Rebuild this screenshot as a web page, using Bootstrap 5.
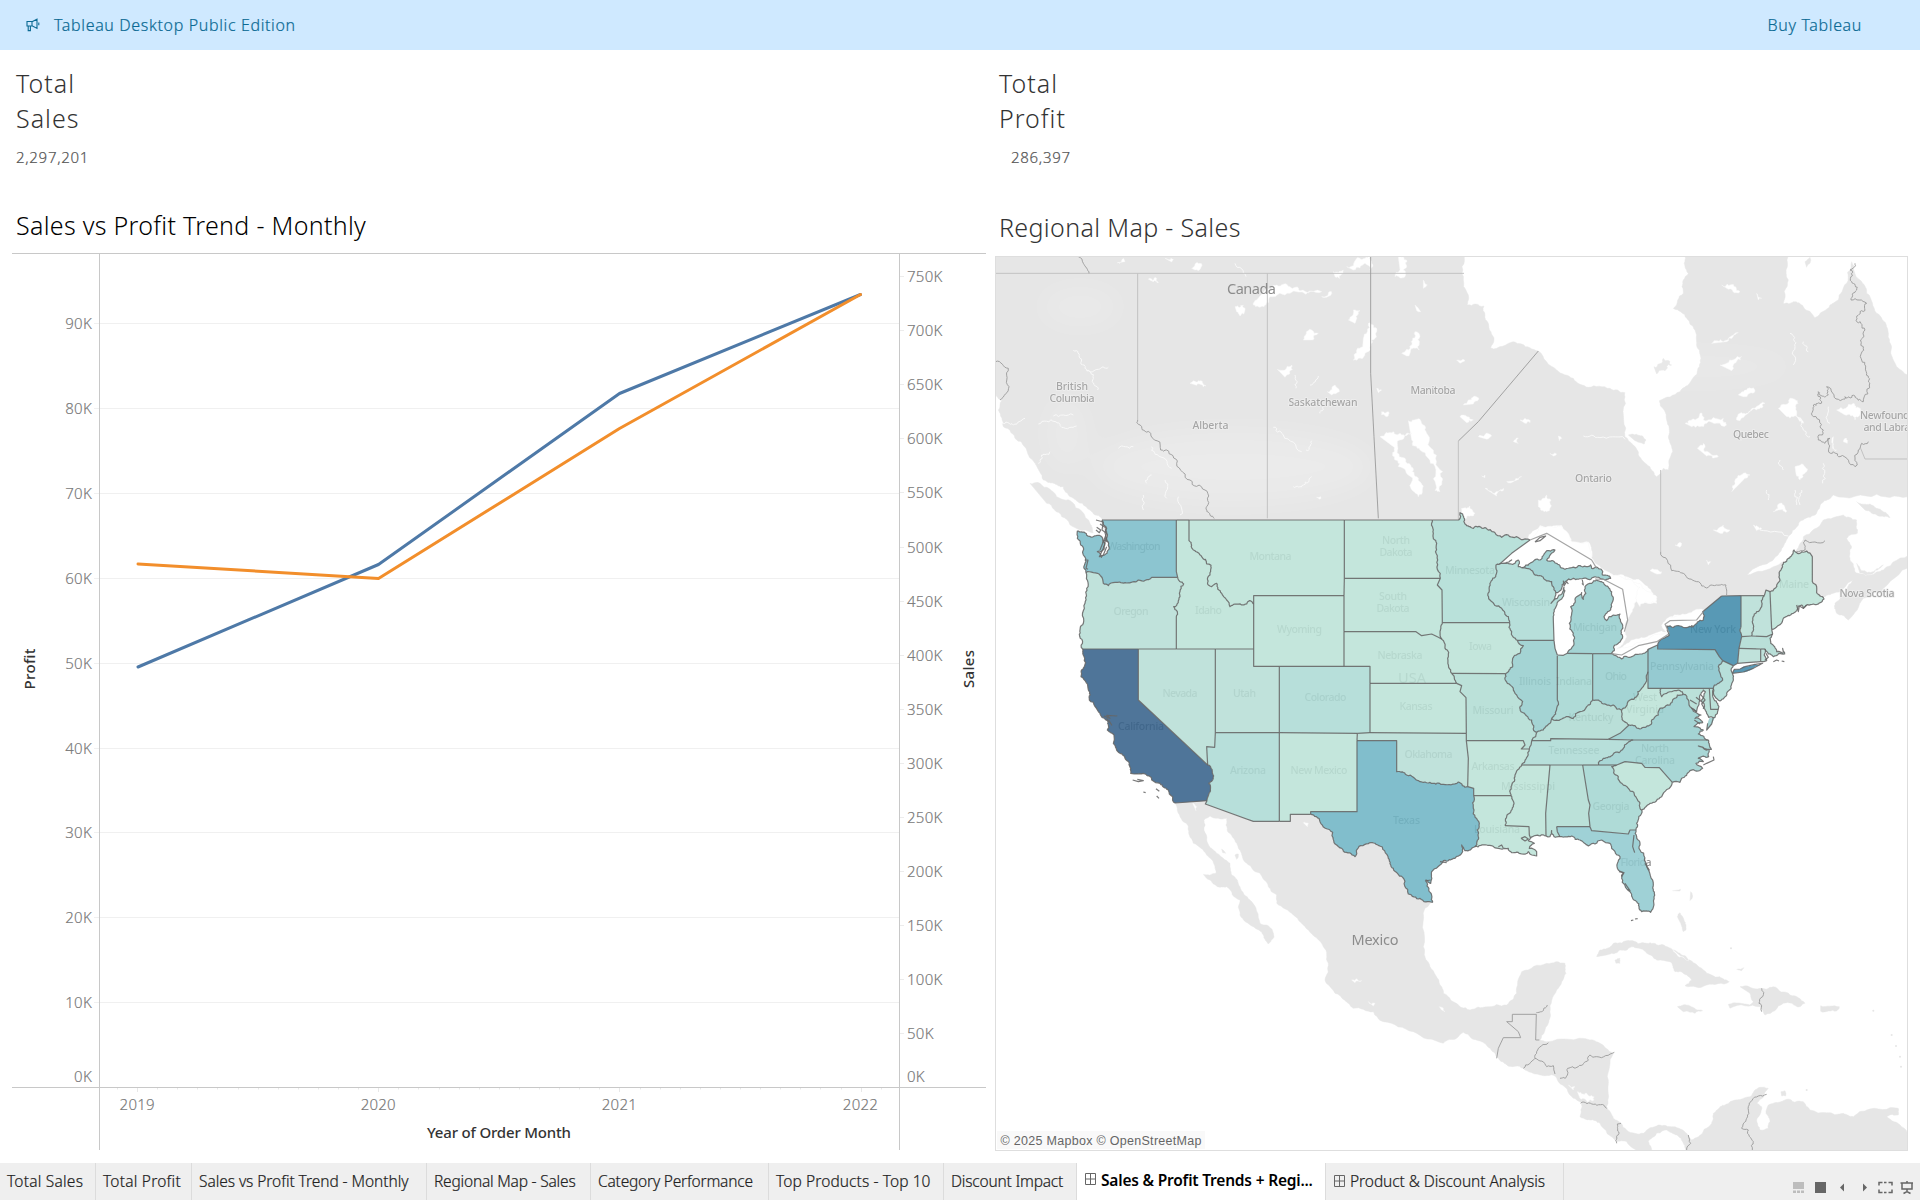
<!DOCTYPE html>
<html lang="en">
<head>
<meta charset="utf-8">
<title>Sales &amp; Profit Trends + Regional Map</title>
<link rel="stylesheet" href="https://cdn.jsdelivr.net/npm/bootstrap@5.3.0/dist/css/bootstrap.min.css">
<style>
  body { width: 1920px; height: 1200px; overflow: hidden; background: #fff; font-family: "Noto Sans", sans-serif; color: #333; }
  .promo-bar { height: 50px; background: #cfe9ff; color: #0b6a94; font-size: 16px; padding: 0 58px 0 26px; }
  .promo-text { font-weight: 300; -webkit-text-stroke: .2px; letter-spacing: .64px; }
  .promo-lead { margin-left: 14px; }
  .dash { height: 1113px; }
  .col-left { width: 995px; padding-left: 12px; }
  .col-right { width: 925px; }
  .kpi { height: 140px; padding: 16px 4px 0; }
  .kpi-title, .viz-title { font-size: 25px; line-height: 35px; font-weight: 300; margin: 0; white-space: nowrap; color: #333; }
  .kpi-title { letter-spacing: 1px; }
  .kpi-num { font-size: 15px; line-height: 20px; margin-top: 11px; color: #555; font-weight: 300; -webkit-text-stroke: .2px; letter-spacing: .7px; }
  .kpi-num.inset { margin-left: 12px; }
  .viz-title { height: 63px; padding: 18px 4px 0; letter-spacing: .3px; }
  .viz-title.dark { color: #000; }
  .viz-title.low { height: 66px; padding-top: 20px; letter-spacing: .36px; }
  svg { display: block; }
  svg text { font-family: "Noto Sans", sans-serif; }
  .tabs { height: 37px; background: #efefef; font-size: 15.5px; color: #222; }
  .tab { border-right: 1px solid #dcdcdc; white-space: nowrap; padding: 1px 0 0 7px; font-weight: 300; -webkit-text-stroke: .2px; flex: none; letter-spacing: -.06px; }
  .tab.wide { letter-spacing: .22px; }
  .tab svg { margin: -3px 5px 0 1px; }
  .tab-on { background: #fff; color: #000; font-weight: 600; -webkit-text-stroke: 0; padding-top: 0; padding-bottom: 2px; letter-spacing: -.2px; }
  .tab-tools { padding: 0 7px 5px 0; }
  .ax { font-size: 15px; fill: #777; font-weight: 300; stroke: #777; stroke-width: .15px; letter-spacing: .25px; }
  .axt { font-size: 15px; fill: #333; font-weight: 500; }
  .prov { font-size: 10.5px; fill: #a6a6a6; text-anchor: middle; font-weight: 500; paint-order: stroke; stroke: #efefef; stroke-width: 1.5px; }
  .prov.covered { stroke: none; fill: #8c8c8c; }
  .ctry { font-size: 14.5px; fill: #8c8c8c; }
  .note { font: 12.5px "Liberation Sans", sans-serif; fill: #666; }
  .land { fill: #e6e6e6; stroke: #f4f4f4; stroke-width: 3; paint-order: stroke; }
  .water { fill: #fff; stroke: #f6f6f6; stroke-width: 1.5; }
  .edge { fill: none; stroke: #9a9a9a; stroke-width: 2.7; }
  .prv { fill: none; stroke: #c2c2c2; stroke-width: 3; }
  .river { fill: none; stroke: #f8f8f8; stroke-width: 3; }
</style>
</head>
<body class="d-flex flex-column">
<header class="promo-bar d-flex align-items-center justify-content-between flex-shrink-0">
  <div class="d-flex align-items-center">
    <svg width="14" height="14" viewBox="0 0 14 14" fill="none" stroke="#0b6a94" stroke-width="1.1"><path d="M1 3.5h5v4.5H1zM6 3.8L11 1.2v9.2L6 7.8M2.2 8v4.6h2.2V8M12.8 4.6v2.6"/></svg>
    <span class="promo-text promo-lead">Tableau Desktop Public Edition</span>
  </div>
  <span class="promo-text">Buy Tableau</span>
</header>

<main class="dash d-flex flex-shrink-0">
  <section class="col-left">
    <div class="kpi"><h1 class="kpi-title">Total<br>Sales</h1><div class="kpi-num">2,297,201</div></div>
    <h2 class="viz-title dark">Sales vs Profit Trend - Monthly</h2>
    <svg id="trend" width="975" height="898" viewBox="12 253 975 898"></svg>
  </section>
  <section class="col-right">
    <div class="kpi"><h1 class="kpi-title">Total<br>Profit</h1><div class="kpi-num inset">286,397</div></div>
    <h2 class="viz-title low">Regional Map - Sales</h2>
    <svg id="map" width="913" height="895" viewBox="995 256 913 895"></svg>
  </section>
</main>

<footer class="tabs d-flex flex-shrink-0">
  <div class="tab wide d-flex align-items-center" style="width:96px">Total Sales</div>
  <div class="tab wide d-flex align-items-center" style="width:96px">Total Profit</div>
  <div class="tab d-flex align-items-center" style="width:235px">Sales vs Profit Trend - Monthly</div>
  <div class="tab d-flex align-items-center" style="width:164px;letter-spacing:-.2px">Regional Map - Sales</div>
  <div class="tab d-flex align-items-center" style="width:178px;letter-spacing:-.2px">Category Performance</div>
  <div class="tab d-flex align-items-center" style="width:175px;letter-spacing:.1px">Top Products - Top 10</div>
  <div class="tab d-flex align-items-center" style="width:133px;letter-spacing:-.2px">Discount Impact</div>
  <div class="tab tab-on d-flex align-items-center" style="width:249px"><svg width="11" height="12" viewBox="0 0 11 12" fill="none" stroke="#666"><path d="M.5.5h10v11H.5zM5.5.5v11M.5 6h10"/></svg>Sales &amp; Profit Trends + Regi...</div>
  <div class="tab d-flex align-items-center" style="width:238px"><svg width="11" height="12" viewBox="0 0 11 12" fill="none" stroke="#666"><path d="M.5.5h10v11H.5zM5.5.5v11M.5 6h10"/></svg>Product &amp; Discount Analysis</div>
  <div class="tab-tools ms-auto d-flex align-items-end">
    <svg width="120" height="14" viewBox="0 0 120 14"><g fill="#bdbdbd"><path d="M0 1h11v7H0zM0 9.5h3V12H0zM4 9.5h3V12H4zM8 9.5h3V12H8z"/></g>
      <path fill="#666" d="M22 1h11v11H22zM51 2.5v8l-4-4zM70 2.5v8l4-4z"/>
      <path fill="none" stroke="#666" stroke-width="1.5" d="M86 4.500V1.500h3.500M91 1.500h2.500M95.500 1.500H99v3M99 8.500v3h-3.500M91 11.500h2.500M89.500 11.500H86v-3M107.500 2h13M109 2v6h10V2M114 0v2M114 8v3M110.500 12.500l3.500-2 3.500 2"/></svg>
  </div>
</footer>

<script src="https://cdn.jsdelivr.net/npm/bootstrap@5.3.0/dist/js/bootstrap.bundle.min.js"></script>
<script>
/* ---- Trend chart ---- */
(function () {
  let h = '';
  const ln = (x1, y1, x2, y2, c) => h += `<path d="M${x1} ${y1}L${x2} ${y2}" stroke="${c}" fill="none"/>`;
  for (let i = 1; i < 10; i++) {
    const y = Math.floor(1087.5 - i * 84.87) + .5;
    ln(94, y, 899, y, '#f0f0f0');
    h += `<text class="ax" x="92" y="${y + 5.5}" text-anchor="end">${i}0K</text>`;
  }
  h += '<text class="ax" x="92" y="1082" text-anchor="end">0K</text><text class="ax" x="907" y="1082">0K</text>';
  for (let i = 1; i <= 15; i++) {
    const y = Math.round(1087.5 - i * 54.1) + .5;
    ln(900, y, 904, y, '#ececec');
    h += `<text class="ax" x="907" y="${y + 5.5}">${i * 50}K</text>`;
  }
  for (let i = -1; i <= 37; i++) {
    const x = Math.round(137 + i * 20.1) + .5;
    ln(x, 1088, x, i % 12 ? 1089.5 : 1092, '#e8e8e8');
  }
  ln(12, 253.5, 986, 253.5, '#c8c8c8'); ln(12, 1087.5, 986, 1087.5, '#c8c8c8');
  ln(99.5, 253, 99.5, 1150, '#c8c8c8'); ln(899.5, 253, 899.5, 1150, '#c8c8c8');
  [2019, 2020, 2021, 2022].forEach((y, i) => h += `<text class="ax" x="${137.2 + i * 241.1}" y="1110" text-anchor="middle">${y}</text>`);
  h += '<text class="axt" x="499" y="1138" text-anchor="middle" textLength="144">Year of Order Month</text>'
    + '<text class="axt" transform="translate(35 669) rotate(-90)" text-anchor="middle" textLength="41">Profit</text>'
    + '<text class="axt" transform="translate(973.500 669) rotate(-90)" text-anchor="middle" textLength="38">Sales</text>'
    + '<g fill="none" stroke-width="3" stroke-linejoin="round" stroke-linecap="round"><path stroke="#4e79a7" d="M138 667L378.500 564.500L619.500 393.500L860.500 294.500"/>'
    + '<path stroke="#f28e2b" d="M138 564L378.500 578.500L619.500 428.500L860.500 294.500"/></g>';
  document.getElementById('trend').innerHTML = h;
})();

/* ---- Map: grid of three units per pixel, split into tiles with their own origins ---- */
(function () {
  const O = { A: [0, 0], B: [1140, 0], C: [0, 840], D: [1140, 960], E: [-210, -750], F: [1170, -750] };
  let seed = 7;
  const rnd = () => (seed = (seed * 16807) % 2147483647) / 2147483647 - .5;
  // Reads "A 1,2 3,4 B 5,6": a letter selects the tile, the pairs are its points
  function pts(s) {
    let o = O.A; const r = [];
    s.trim().split(/\s+/).forEach(t => {
      if (O[t]) o = O[t]; else { const p = t.split(',').map(Number); r.push([p[0] + o[0], p[1] + o[1]]); }
    });
    return r;
  }
  // Natural coast or river: subdivides each segment with a small offset; sides longer than max stay straight
  function rough(p, k, max) {
    for (let n = 0; n < 3; n++) {
      const q = [p[0]];
      for (let i = 1; i < p.length; i++) {
        const a = p[i - 1], b = p[i], dx = b[0] - a[0], dy = b[1] - a[1], L = Math.hypot(dx, dy);
        if (L > 7 && !(max && L > max)) { const m = Math.max(-5, Math.min(5, rnd() * k * L)) / L; q.push([(a[0] + b[0]) / 2 - dy * m, (a[1] + b[1]) / 2 + dx * m]); }
        q.push(b);
      }
      p = q;
    }
    return p;
  }
  const d = p => 'M' + p.map(a => a[0].toFixed(1) + ' ' + a[1].toFixed(1)).join('L');
  let base = '';
  const area = (s, c, k) => base += `<path class="${c}" d="${d(rough(pts(s), k === undefined ? .3 : k))}Z"/>`;
  const line = (s, c, k) => base += `<path class="${c}" d="${d(k ? rough(pts(s), k) : pts(s))}"/>`;

  // Canada
  area(`E 10,10 F 42,10 40,90 52,165 102,168 115,220 132,270 122,293 190,275 215,282 265,303 320,360 370,385 415,412 480,415 525,428 527,460 525,560 565,615 600,650 620,680 640,655 655,660 668,605 655,560 650,510 628,452 690,425 725,390 748,350 748,300 735,240 710,205 670,175 700,130 700,90 715,70 705,50 710,10 1012,10 1015,90 1000,160 1030,155 1060,170 1095,203 1140,165 1165,150 1190,100 1205,35 1230,90 1250,130 1280,190 1310,230 1325,290 1330,330 1385,395 1385,737 1280,733 1150,735 1115,760 1100,790 1060,810 1020,855 1000,890 960,935 880,980 970,950 1030,910 1060,860 1120,810 1180,795 1220,810 1222,850 1190,865 1205,890 1200,930 1215,965 1260,975 1300,960 1385,910 1385,945 1290,1030 1240,1045 1195,1110 1160,1090 1155,1060 1190,1020 1210,990 1150,1030 1115,1050 1050,1020 900,1060 800,1090
    B 800,330 765,335 720,345 690,350 678,365 665,375 680,395 620,410 560,430 530,450 523,440 545,400 550,370 570,340 590,300 620,310 650,308 640,280 600,240 560,230 520,225 485,205 455,175 445,125 395,125 365,75 300,75 262,118 180,150 0,150 A 300,200 140,100 126,60 E 335,805 315,795 300,780 250,745 220,710 190,700 160,690 135,640 110,600 80,570 40,530 25,480 35,450 10,420`, 'land');
  area('E 120,700 150,700 200,740 245,755 300,820 310,848 270,840 215,800 170,760', 'land');
  area('F 1220,755 1260,762 1300,785 1320,803 1285,798 1245,780', 'land');
  area('F 1220,940 1235,962 1270,965 1300,945 1265,972 1230,970', 'land');
  area('F 535,555 560,553 588,570 583,582 555,572', 'land'); area('F 1065,35 1080,22 1080,40 1070,52', 'land');
  area('F 612,350 640,325 665,345 640,360 620,372', 'land', .8);
  // Paler plains and hills
  base += '<g fill="#fff" filter="url(#soft)"><ellipse cx="520" cy="-100" rx="420" ry="110" opacity=".2"/><ellipse cx="60" cy="-580" rx="120" ry="60" opacity=".16"/><ellipse cx="20" cy="-200" rx="60" ry="110" opacity=".16"/><ellipse cx="1010" cy="1330" rx="70" ry="110" opacity=".14"/><ellipse cx="1900" cy="-400" rx="300" ry="60" opacity=".1"/><ellipse cx="700" cy="1080" rx="60" ry="80" opacity=".16"/></g>';
  // Mexico, Central and South America
  area(`C 345,55 345,70 360,110 385,140 400,190 440,225 465,260 468,280 430,283 450,300 480,322 500,320 540,360 540,405 580,440 610,465 625,492 642,470 625,437 600,430 570,360 540,320 515,285 510,250 470,220 440,180 432,120 450,108 500,115 503,155 530,190 560,250 600,280 625,320 650,345 650,370 700,405 745,450 790,500 805,550 795,600 825,640 880,685 940,695 970,725 1060,755 1150,790 1190,775 1210,757 1260,783
    D 175,715 200,735 250,745 300,765 345,768 355,785 400,835 425,850 420,890 450,900 480,910 530,965 560,965 610,1000 640,1000 625,965 650,940 680,930 710,945 730,970 740,1000 1410,1000 1410,945 1385,920 1340,890 1375,885 1375,865 1280,870 1240,890 1210,880 1110,870 1090,845 1040,838 985,855 978,880 990,905 985,925 960,930 950,900 965,860 950,850 985,805 960,802 930,830 870,845 840,860 820,880 815,910 775,950 755,960 740,940 700,920 655,915 610,940 560,930 520,895 500,860 505,780 520,700 480,670 450,660 320,665 300,660 325,610 330,575 350,510 378,460 375,430 320,430 245,455 230,520 200,555 140,560 90,570 40,545 10,520 0,495
    C 1110,560 1090,500 1095,385 1118,365 1050,300 900,100 650,60`, 'land', .25);
  area('D 470,410 480,390 520,370 570,362 620,370 660,375 700,395 740,420 790,450 840,470 868,485 800,495 735,497 755,480 740,465 705,455 690,425 650,420 620,400 580,380 540,390 500,405', 'land');
  area('D 712,560 750,558 788,572 765,580 730,575', 'land'); area('D 525,420 540,415 540,430 528,430', 'land');
  area('D 900,500 960,505 1000,500 1050,525 1095,550 1080,560 1030,550 975,585 960,560 870,565 865,553 930,555 940,545 930,520', 'land');
  area('D 1142,557 1198,560 1190,573 1142,574', 'land'); area('D 712,290 720,278 732,300 738,330 730,335 722,310', 'land');
  area('D 890,448 912,443 905,452', 'land'); area('D 1023,815 1035,812 1037,828 1025,828', 'land');
  area('C 525,225 535,222 530,238', 'land'); area('C 485,207 497,220 488,218', 'land');
  area('D 698,212 722,208 720,213', 'land'); area('D 752,215 758,228 750,242', 'land'); area('D 700,390 720,400 745,422 722,408', 'land');
  [[1355, 645], [1368, 678], [1380, 710], [1383, 740], [1300, 572], [1100, 810], [873, 385]].forEach(p => base += `<circle cx="${p[0] + 1140}" cy="${p[1] + 960}" r="3" fill="#e6e6e6"/>`);

  // Lakes
  ['E 830,115 860,105 900,110 930,122 995,125 900,130 840,140 822,170 790,165 800,150', 'E 735,170 760,165 765,180 750,198 740,185', 'E 1255,512 1290,508 1310,550 1330,600 1358,665 1350,725 1335,722 1335,650 1290,600 1265,570',
   'E 1170,560 1210,545 1235,555 1265,550 1230,570 1228,620 1262,645 1280,680 1297,720 1285,740 1268,722 1262,680 1225,650 1213,620 1210,590', 'E 1075,210 1090,180 1110,182 1095,220', 'E 1120,265 1135,220 1160,235 1145,270 1125,310 1090,330 1100,300 1118,290',
   'E 940,270 965,240 985,250 965,270', 'E 862,358 885,360 905,345 900,370 885,382', 'E 1012,425 1035,405 1048,425 1025,435', 'E 1235,310 1265,285 1275,245 1290,260 1288,300 1262,300 1250,318', 'E 600,400 625,392 648,408 620,406', 'E 475,88 500,85 505,98 490,95',
   'E 382,38 400,25 405,35', 'E 525,25 550,28 545,36', 'E 605,55 630,40 632,55 615,60', 'E 1070,50 1110,25 1140,20 1140,60 1125,40 1090,60', 'E 1225,20 1250,30 1240,60 1245,80 1215,80 1230,60', 'E 1300,90 1312,105 1300,115', 'E 1275,165 1292,185 1280,182', 'E 1030,65 1060,60 1050,85 1035,80', 'E 995,140 1025,125 1010,142', 'E 980,742 992,740 990,748', 'E 1160,415 1175,420 1165,428', 'E 1175,485 1195,485 1190,500 1175,495',
   'F 815,105 840,105 870,125 830,115', 'F 785,280 820,275 865,248 830,275', 'F 810,345 830,340 875,320 850,345 845,362', 'F 705,520 735,510 750,490 760,510 820,505 830,525 770,520 725,530', 'F 860,510 870,490 900,485 945,460 920,480 870,512', 'F 865,435 890,420 915,420 880,440', 'F 985,475 1020,445 1045,460 1040,500 1060,520 1030,500 1010,500', 'F 845,725 855,690 880,670 900,675 880,690', 'F 742,595 760,580 765,605 805,620 770,618', 'F 40,465 55,450 85,443 70,462', 'F 30,500 70,510 50,518', 'F 210,510 225,505 240,518 225,520', 'F 265,750 290,735 300,760 290,785 265,770', 'F 170,695 215,680 195,692', 'F 105,715 125,725 160,715 140,738', 'F 85,560 125,558 105,566', 'F 20,330 45,332 30,340', 'F 300,610 320,612 310,618', 'F 790,840 820,825 840,840 810,850', 'F 600,962 635,965 615,970', 'F 35,775 60,768 75,790 50,805 35,795', 'F 910,825 935,835 920,842', 'F 970,785 990,760 1010,785 985,780', 'F 1160,480 1210,460 1232,480 1215,510 1185,495', 'F 1150,560 1160,600 1148,590', 'F 1180,575 1190,565 1192,580', 'F 920,130 935,145 925,150', 'F 190,575 205,565 205,580', 'F 325,558 335,565 328,572', 'F 95,678 105,675 105,683', 'F 770,930 782,935 775,945', 'F 675,885 695,880 690,892', 'F 1035,650 1055,642 1070,665 1050,690 1038,672',
   'C 730,128 745,130 742,140', 'C 875,600 905,602 885,608', 'C 925,665 945,670 940,678', 'C 1138,680 1155,695 1145,690', 'C 398,70 410,80 408,92', 'D 412,815 440,820 462,840 445,848 420,835', 'D 385,795 405,800 400,810',
   'B 555,230 600,250 640,285 650,310 600,320 575,280'].forEach(s => area(s, 'water', .7));
  // Great Lakes
  area('B 172,198 205,165 270,118 300,78 365,78 395,125 445,128 455,175 485,205 520,228 575,240 600,262 590,300 570,345 555,380 560,410 530,448 590,428 680,398 650,440 620,455 545,482 505,462 400,300 400,470 340,470 335,300 240,210', 'water');
  area('B 640,440 690,410 665,375 690,350 740,342 765,330 790,330 800,370 700,400', 'water');
  ['E 250,300 270,325 285,355 310,385 323,420', 'E 290,362 325,358 355,352', 'E 190,498 250,495', 'E 145,522 195,515 215,532 260,528', 'E 485,590 510,620 545,655', 'E 850,532 880,555 935,605', 'E 948,600 965,572', 'E 910,710 940,705 965,680', 'E 385,595 430,590', 'E 460,780 460,735', 'E 565,740 570,795', 'E 525,690 530,745', 'E 990,490 1000,465', 'E 735,40 768,80', 'E 915,375 918,415', 'E 960,405 985,378', 'E 145,640 155,615 180,605', 'E 35,520 70,525 105,505', 'E 470,700 485,675', 'F 400,558 450,563 525,568', 'F 1020,250 1035,290 1030,345', 'F 1060,275 1075,305', 'F 1040,490 1060,540 1080,560', 'F 1120,640 1118,700', 'F 1055,720 1050,765', 'F 1035,720 1040,765', 'F 990,630 1000,660', 'F 950,720 955,750', 'F 930,840 1015,858', 'F 1135,470 1140,520'].forEach(s => line(s, 'river', .7));

  // Provincial and national borders
  line('E 17,70 F 42,70', 'prv'); line('E 443,70 443,510', 'prv'); line('E 832,70 832,805', 'prv');
  line('E 1142,20 1142,370 1152,560 1165,805', 'edge'); line('F 265,303 85,515 25,573', 'edge'); line('F 25,573 25,808', 'prv');
  line('E 443,510 455,530 482,550 512,600 530,600 560,640 600,690 645,720 650,770 660,795 673,805', 'edge', .6);
  line('F 632,660 632,905', 'prv'); line('F 632,905 665,962 700,970 740,995 775,1012 800,1005 828,1005 830,1035', 'edge', .4);
  line('F 1215,40 1200,60 1205,95 1220,120 1203,150 1250,160 1230,185 1220,215 1245,240 1240,290 1235,330 1250,370 1258,405 1240,455 1215,438 1185,440 1165,448 1130,410 1127,440 1105,425 1115,455 1090,465 1090,500 1120,540 1105,570 1125,580 1140,565 1142,610 1170,620 1215,650 1225,600 1235,580 1255,575', 'edge', .8);
  line('F 1232,595 1245,627 1372,627', 'prv'); line('F 1040,905 1065,900 1065,870 1125,872', 'edge', .5);
  line('E 17,335 55,355 57,410 30,450', 'edge', .4); line('E 265,20 280,40 297,70', 'edge', .4);
  line('D 170,715 175,685 190,653 242,653 235,635 200,605 217,605 217,583 289,583 287,660 298,660', 'edge'); line('D 289,578 305,575 322,555', 'edge', .4);
  line('D 250,745 285,715 290,695 325,668', 'edge', .4); line('D 285,715 320,740 340,737 345,762', 'edge', .4);
  line('D 360,775 375,775 383,745 415,740 445,720 450,705 470,710 523,697', 'edge', .5); line('D 422,850 460,853 500,865', 'edge', .5);
  line('D 543,910 532,912 537,940 530,970', 'edge', .4); line('D 745,945 752,970 740,990', 'edge', .4); line('D 980,823 955,828 925,860 918,900 905,925 925,930 940,965 937,990', 'edge', .4);
  line('D 965,505 968,530 957,550 965,575', 'edge', .5);

  // State borders: each arc is shared by the states on both sides; "~" marks a natural one
  const arcs = {
    waN: '126,60 349,60', waC: '~126,60 138,80 140,100 146,130 143,152 124,172 112,155 132,148 128,120 118,106 80,106 52,93 52,115 62,135 70,165 75,190 78,218', waOr: '~78,218 100,218 122,228 130,250 145,257 165,247 200,249 235,240 275,232 353,232', waId: '349,60 349,215 353,232',
    orC: '~78,218 80,265 75,310 70,370 58,403 68,447', orId: '~353,232 371,252 360,290 341,320 352,335 349,350 349,447', orCa: '68,447 235,447', orNv: '235,447 349,447', idNv: '349,447 466,447', idUt: '466,447 581,447', idN: '349,60 387,60',
    idMt: '~387,60 387,122 400,150 425,170 440,192 453,196 450,225 445,255 455,260 470,250 485,280 500,300 510,320 525,312 545,315 560,312 568,302 581,312', mtWy: '581,312 581,287 852,287', idWy: '581,312 581,447', wyUt: '581,447 581,499 658,499',
    mtN: '387,60 853,60', mtNd: '853,60 853,235', mtSd: '853,235 852,287', wySd: '852,287 852,395', wyNe: '852,395 852,499', wyCo: '658,499 852,499', neCo: '852,499 930,499 930,550', ndN: '853,60 1117,60', ndSd: '853,235 1141,235', ndMn: '~1117,60 1120,100 1130,130 1133,180 1141,235', sdMn: '1141,235 1132,255 1146,270 1147,368',
    sdNe: '852,395 1068,395 1085,407 1115,402 1135,412 1146,418', sdIa: '~1147,368 1140,395 1146,418', neIa: '~1146,418 1155,440 1165,470 1172,510 1175,520', neMo: '~1175,520 1190,550', neKs: '930,550 1190,550', ksMo: '1190,550 1205,557 1200,575 1218,593 1219,700', coKs: '930,550 930,698', coOk: '892,700 930,698', ksOk: '930,698 1219,700', coNm: '658,698 892,700', coUt: '658,499 658,698', utAz: '466,698 658,698', utNv: '466,447 466,698',
    nvAz: '466,698 464,742 440,740 443,795', nvCa: '235,447 235,600 443,795', caAz: '~443,795 461,828 446,850 447,880 441,902', caMx: '441,902 345,909', caC: '~68,447 74,475 73,500 63,530 85,570 88,600 120,640 138,660 142,690 162,705 160,730 180,760 208,790 212,820 255,822 275,840 300,850 325,870 338,890 345,909', azMx: '441,902 436,912 580,964 658,964', azNm: '658,698 658,964', nmMx: '658,964 691,964 691,943 752,943', nmTx: '752,943 752,935 891,935 891,722', nmOk: '892,700 891,722',
    txOk: '~891,722 1010,722 1010,815 1040,825 1060,832 1080,845 1120,850 1150,853 1195,846 1223,860', okMo: '1219,700 1219,722', okAr: '1219,722 1225,775 1223,860', moAr: '1219,722 B 250,722 255,735 244,747 268,747', arTx: '1223,860 1241,865 1241,887', arLa: '1241,887 1353,887', txLa: '~B 101,887 102,930 118,970 115,1010 105,1040',
    txMx: '~752,943 780,965 818,997 830,1035 850,1053 885,1070 902,1037 925,1031 955,1036 985,1075 1000,1105 1028,1132 1045,1182 1080,1195 1118,1207', txC: '~B 105,1040 75,1052 65,1035 68,1055 45,1075 A 1150,1082 1140,1095 1118,1112 1112,1150 1098,1140 1108,1175 1118,1207',
    mnN: '~B -23,60 56,60 60,38 68,42 75,72 100,85 135,83 165,98 185,112 205,105 230,110 270,120', mnLk: 'B 270,120 215,160 178,193', mnWi: '~B 178,193 168,195 167,230 148,260 150,300 185,325 205,350 209,368', mnIa: 'B 7,368 209,368', wiIa: '~B 209,368 215,395 232,421', wiIl: 'B 232,421 342,421', iaIl: '~B 232,421 250,437 240,460 218,475 218,500 197,521', iaMo: 'B 35,520 197,521', ilMo: '~B 197,521 202,550 230,585 248,605 243,635 275,660 285,695 290,697',
    ilKy: '~B 290,697 310,690 330,670 335,655', ilIn: '~B 335,655 350,625 352,600 352,467', ilLk: 'B 342,421 345,445 352,465', inLk: 'B 352,465 370,466 382,460', miIn: 'B 382,460 458,461', inOh: 'B 458,461 458,600', miOh: 'B 458,461 512,461', inKy: '~B 335,655 365,657 385,650 400,655 420,635 440,620 458,600', ohKy: '~B 458,600 475,600 490,612 520,615 545,630', ohWv: '~B 545,630 558,620 570,600 590,590 605,565 620,540 624,515', ohPa: 'B 624,515 624,448', ohLk: '~B 512,461 530,468 545,477 575,470 600,462 624,448',
    paLk: 'B 624,448 653,435', paNy: 'B 653,435 653,447 825,449 838,470 848,482', paNj: '~B 848,482 835,500 848,540 820,565', paWv: 'B 624,515 624,565 665,565', paMd: 'B 665,565 808,565', paDe: 'B 808,565 820,565', njNy: 'B 848,482 880,497', njC: '~B 880,497 875,515 878,545 860,580 840,603 825,590 820,565', deMd: 'B 808,565 812,628 835,628', deC: '~B 820,565 822,598 835,628',
    wiSup: '~B 178,193 215,180 195,190 225,190 235,180 235,200 245,203', wiMi: '~B 245,203 280,218 310,232 335,245 340,260 347,278', upC: '~B 245,203 270,190 300,180 318,155 345,150 320,180 350,190 375,208 415,197 452,195 455,205 483,207 487,225 512,235 480,235 460,232 430,235 400,235 375,245 365,265 347,278', wiC: '~B 347,278 345,290 333,310 352,295 372,262 360,300 348,320 340,360 342,421',
    miC: '~B 382,460 402,430 400,400 388,370 392,320 410,290 425,278 430,298 435,260 455,250 470,240 495,255 515,275 515,320 492,350 500,362 520,345 540,342 548,375 548,410 525,435 523,452 512,461', nyLk: '~B 653,435 688,405 680,378 720,378 760,380 790,360 788,335 845,288', nyN: 'B 845,288 903,287', nyVt: '~B 903,287 903,380 905,410', nyMa: 'B 905,410 897,445', nyCt: 'B 897,445 893,490', nyC: 'B 893,490 880,497',
    vtN: 'B 903,287 973,287', vtNh: '~B 973,287 965,320 950,335 938,370 935,408', vtMa: 'B 905,410 935,408', nhMa: 'B 935,408 980,410 998,402', nhN: 'B 973,287 978,270 990,275', nhMe: 'B 990,275 995,388', nhC: 'B 995,388 998,402', meC: '~B 990,275 1005,265 1020,240 1025,205 1045,175 1062,150 1072,160 1100,153 1117,170 1117,245 1130,260 1138,285 1152,297 1120,312 1090,325 1085,315 1075,318 1060,340 1030,355 1005,385 995,388',
    maC: '~B 998,402 992,430 1010,455 1028,460 1028,445 1034,462 1000,470 985,462 975,447', maCt: 'B 897,445 962,447', maRi: 'B 962,447 975,447', ctRi: 'B 962,447 962,485', ctC: 'B 893,490 920,488 962,485', riC: '~B 962,485 980,482 975,447',
    mdWv: '~B 665,565 665,590 680,580 700,573 720,572 730,583', mdVa: '~B 730,583 745,600 750,620 770,635', mdC: '~B 770,635 778,605 790,570 796,575 785,600 790,625 800,640 806,652 825,652 835,628', wvVa: '~B 730,583 712,585 690,615 660,625 655,645 635,660 630,675 600,687 567,675', wvKy: '~B 545,630 545,650 567,675', kyVa: 'B 567,675 540,700 505,718', kyTn: 'B 505,718 332,716 332,722 275,722', moKy: '~B 290,697 287,710 275,722', moTn: '~B 275,722 268,747', arTn: '~B 268,747 262,770 245,795', tnMs: 'B 245,795 330,795', tnAl: 'B 330,795 428,795', tnGa: 'B 428,795 476,795', tnNc: '~B 476,795 490,775 520,762 550,745 580,720', tnVa: 'B 505,718 580,720', vaNc: 'B 580,720 805,720', vaC: '~B 770,635 755,625 783,645 765,655 788,668 762,680 790,690 775,702 805,720',
    ncGa: 'B 476,795 530,795', ncSc: 'B 530,795 555,785 605,790 615,802 658,803 697,847', ncC: '~B 805,720 814,748 775,738 808,752 806,770 775,775 790,785 768,790 788,805 750,812 725,835 720,847 697,847', gaSc: '~B 530,795 515,800 535,830 565,865 590,895 600,925 605,930', scC: '~B 697,847 665,890 630,910 605,930', gaC: '~B 605,930 590,970 588,990', gaFl: 'B 588,990 570,990 565,1002 455,992 450,980', flAl: 'B 450,980 350,980', alGa: 'B 428,795 445,900 450,915 446,940 450,980', msAl: 'B 330,795 317,940 318,1008', msAr: '~B 245,795 225,825 213,860 213,887', msLa: '~B 213,887 220,920 200,950 195,977', msLa2: 'B 195,977 267,980 268,1005 272,1015', msC: '~B 272,1015 300,1008 318,1008', alC: '~B 318,1008 330,1010 335,992 342,1010 360,1010', alFl: 'B 350,980 352,995 360,1010',
    laC: '~B 105,1040 140,1035 175,1045 205,1045 215,1058 245,1062 265,1055 290,1068 290,1055 268,1045 283,1030 265,1022 272,1015', flC: '~B 360,1010 395,1008 420,1020 445,1038 465,1032 485,1020 510,1030 525,1055 540,1070 535,1110 550,1120 545,1135 570,1175 590,1205 605,1235 632,1237 642,1190 640,1155 620,1100 600,1050 590,1010 588,990'
  };
  const P = {};
  for (const k in arcs) { const s = arcs[k]; P[k] = s[0] === '~' ? rough(pts(s.slice(1)), .4, 61) : pts(s); }
  const G = '#bde5d9', H = '#b9e1d8', M = '#aeddd7', N = '#98d0d0';
  const states = [
    ['#7bbecb', 'waN waId waOr waC'], [H, 'waOr orId orNv orCa orC'], ['#34608b', 'orCa nvCa caAz caMx caC'], [H, 'orNv idNv utNv nvAz nvCa'], [G, 'idN idMt idWy idUt idNv orId waId'], [G, 'mtN mtNd mtSd mtWy idMt'], [G, 'mtWy wySd wyNe wyCo wyUt idWy'], [H, 'idUt wyUt coUt utAz utNv'], [M, 'wyCo neCo coKs coOk coNm coUt'], [M, 'utAz azNm azMx caAz nvAz'], [G, 'coNm nmOk nmTx nmMx azNm'],
    [G, 'ndN ndMn ndSd mtNd'], [G, 'ndSd sdMn sdIa sdNe wySd mtSd'], [G, 'sdNe neIa neMo neKs neCo wyNe'], [G, 'neKs ksMo ksOk coKs'], [H, 'coOk ksOk okMo okAr txOk nmOk'], ['#6eb6c7', 'nmTx txOk arTx txLa txC txMx'], ['#b0dfd7', 'mnN mnLk mnWi mnIa sdMn ndMn'], [G, 'mnIa wiIa iaIl iaMo neIa sdIa'], ['#b3dfd6', 'iaMo ilMo moKy moTn moAr okMo ksMo neMo'], [G, 'moAr arTn msAr arLa arTx okAr'], [G, 'arLa msLa msLa2 laC txLa'],
    [M, 'mnWi wiSup wiMi wiC wiIl wiIa'], [N, 'wiMi upC'], [N, 'miC miOh miIn'], [N, 'wiIl ilLk ilIn ilKy ilMo iaIl'], ['#a5d8d4', 'inLk miIn inOh inKy ilIn'], [N, 'miOh ohLk ohPa ohWv ohKy inOh'], ['#b0ddd5', 'ilKy inKy ohKy wvKy kyVa kyTn moKy'], [M, 'kyTn tnVa tnNc tnGa tnAl tnMs arTn moTn'], [G, 'tnMs msAl msC msLa2 msLa msAr'], ['#b3dfd6', 'tnAl alGa flAl alFl alC msAl'], ['#a5d8d4', 'tnGa ncGa gaSc gaC gaFl alGa'], ['#92cdd2', 'flAl gaFl flC alFl'], [G, 'ncSc scC gaSc'], ['#9ed3d2', 'tnNc vaNc ncC ncSc ncGa'], [N, 'wvVa mdVa vaC vaNc tnVa kyVa'], [G, 'ohWv paWv mdWv wvVa wvKy'], ['#b3dfd6', 'paMd deMd mdC mdVa mdWv'], ['#b3dfd6', 'paDe deC deMd'], ['#aeddd7', 'njNy njC paNj'],
    ['#86c4cd', 'paLk paNy paNj paDe paMd paWv ohPa'], ['#3e8bac', 'nyLk nyN nyVt nyMa nyCt nyC njNy paNy'], [H, 'vtN vtNh vtMa nyVt'], [H, 'nhN nhMe nhC nhMa vtNh'], [G, 'meC nhMe'], ['#b0ddd5', 'vtMa nhMa maC maRi maCt nyMa'], [H, 'maCt ctRi ctC nyCt'], [H, 'maRi riC ctRi']
  ];
  const D2 = (a, b) => (a[0] - b[0]) ** 2 + (a[1] - b[1]) ** 2, last = a => a[a.length - 1];
  let under = '', over = '';
  const put = (c, q) => { under += `<path d="${q}Z" fill="#e6e6e6"/>`; over += `<path d="${q}Z" fill="${c}"/>`; };
  states.forEach(([c, s]) => {
    const a = s.split(' ').map(k => P[k].slice());
    const n = a[1], e = p => Math.min(D2(p, n[0]), D2(p, last(n)));
    if (e(a[0][0]) < e(last(a[0]))) a[0].reverse();
    let r = a[0];
    for (let i = 1; i < a.length; i++) { if (D2(last(r), last(a[i])) < D2(last(r), a[i][0])) a[i].reverse(); r = r.concat(a[i]); }
    put(c, d(r));
  });
  put('#3e8bac', d(rough(pts('B 877,520 883,508 900,507 915,500 945,493 960,495 940,505 910,516'), .3)));
  put(N, d(pts('B 808,655 825,652 815,672 800,690 803,670')));
  let lines = '';
  for (const k in P) lines += `<path d="${d(P[k])}"/>`;
  ['B 877,520 883,508 900,507 915,500 945,493 968,490 940,505 910,516 877,520', 'B 820,653 815,672 800,690 803,670', 'B 285,126 300,112 317,108 300,122 285,126', 'B 582,1005 578,1040 584,1058', 'B 243,1015 255,1010 265,1017 255,1023 243,1015', 'B 1000,485 1010,480 1017,483', 'B 1025,483 1033,485', 'B 573,1262 580,1260', 'B 585,1257 593,1256', '218,840 235,845 250,842 232,838', '250,876 257,878', '288,866 298,874', '290,888 297,895', '132,648 150,655 140,646 172,648', '140,655 155,675 146,660', '108,60 130,66 126,90 140,100 128,130', '138,110 132,140 118,170 130,165 140,140', '120,72 140,85 135,98 142,125 132,120 120,150', '110,82 122,90 118,98 108,90', 'B 820,770 822,780 800,790 790,795', 'B 427,240 430,255 426,250', '74,180 84,180 78,205 84,208', 'B 615,1090 628,1110 622,1105', 'B 783,585 795,600 785,612 793,625', 'B 763,660 780,672', 'B 768,592 785,605', 'B 750,600 770,612', 'B 1070,315 1075,335 1078,318 1090,325 1100,315', 'B 978,460 985,472 975,480', 'B 537,1115 552,1118 545,1130', 'B 555,1150 570,1172 563,1168', 'B 370,242 372,258 380,245 385,252', 'B 175,1040 185,1035 190,1045', '1095,1143 1112,1140', '1140,1085 1160,1088'].forEach(s => lines += `<path d="${d(pts(s))}"/>`);
  const lakes = ['B 270,120 320,100 455,180 470,205', 'B 465,237 490,238 548,268 563,360 553,395', 'B 515,461 545,465 595,437 650,425 685,403', 'B 688,400 675,373 690,362 770,360 790,335'].map(s => `<path d="${d(pts(s))}"/>`).join('');

  const T = (t, x, y, w, c) => `<text class="prov ${c || ''}" x="${x}" y="${y + 3.5}" textLength="${w}">${t}</text>`;
  const labels = T('British', 1072, 386, 32) + T('Columbia', 1072, 398, 45) + T('Alberta', 1210.5, 425.5, 36) + T('Saskatchewan', 1323, 402, 69) + T('Manitoba', 1433, 390, 45) + T('Ontario', 1593.500, 478, 37) + T('Quebec', 1751, 434, 36)
    + T('Newfoundland', 1895, 415, 70) + T('and Labrador', 1895, 427, 63) + T('Nova Scotia', 1867, 593, 55)
    + [['Washington', 1134, 546, 53], ['Oregon', 1131, 611, 35], ['Idaho', 1208.5, 610, 27], ['Montana', 1270.5, 556, 42], ['Wyoming', 1299.5, 629, 45], ['Nevada', 1180, 693, 35], ['Utah', 1244.5, 693, 23], ['Colorado', 1325.5, 697.5, 42], ['Arizona', 1248, 770, 36], ['New Mexico', 1319, 770, 57], ['California', 1141, 726, 46], ['Texas', 1406.5, 820, 27], ['Oklahoma', 1428.5, 754.5, 48], ['Kansas', 1416, 706, 33], ['Nebraska', 1400, 655, 45], ['North', 1396, 540.5, 28], ['Dakota', 1396, 552.5, 33], ['South', 1393, 596, 28], ['Dakota', 1393, 608.5, 33], ['Minnesota', 1470, 570, 50], ['Iowa', 1480.5, 646.5, 23], ['Missouri', 1493, 710, 41], ['Arkansas', 1493, 766, 43], ['Louisiana', 1497, 829, 46], ['Mississippi', 1528, 786, 54], ['Wisconsin', 1526, 602, 48], ['Michigan', 1595, 627, 44], ['Illinois', 1535, 681, 32], ['Indiana', 1574, 681, 36], ['Ohio', 1616, 676.5, 22], ['Kentucky', 1591, 717.5, 45], ['West', 1645, 697.5, 24], ['Virginia', 1645, 709.5, 38], ['Pennsylvania', 1682, 666, 64], ['New York', 1713, 629, 46], ['Maine', 1794, 584, 30], ['Tennessee', 1574, 750, 51], ['North', 1655, 748, 28], ['Carolina', 1655, 760, 40], ['Georgia', 1611, 806.5, 37], ['Florida', 1636, 862, 31]].map(a => T(a[0], a[1], a[2], a[3], 'covered')).join('')
    + '<text class="ctry" x="1227" y="294" textLength="49">Canada</text><text class="ctry" x="1351.500" y="944.500" textLength="47">Mexico</text><text class="ctry" x="1398" y="682.500" textLength="28">USA</text>';
  const g = '<g transform="translate(1060 500) scale(.33333)"';
  document.getElementById('map').innerHTML = '<defs><filter id="soft" x="-50%" y="-50%" width="200%" height="200%"><feGaussianBlur stdDeviation="40"/></filter></defs><rect x="995" y="256" width="913" height="895" fill="#fff"/>'
    + g + '>' + base + '</g>' + g + '>' + under + '</g>' + labels
    + g + ' fill-opacity=".85">' + over + '</g>' + g + ` fill="none" stroke="#666" stroke-width="3.600" stroke-linejoin="round" stroke-opacity=".88">${lines}<g stroke="#999">${lakes}</g></g>`
    + '<rect x="997" y="1131" width="208" height="18" fill="#f9f9f9"/><text class="note" x="1000.500" y="1145" textLength="201">© 2025 Mapbox © OpenStreetMap</text>'
    + '<rect x="995.500" y="256.500" width="912" height="894" fill="none" stroke="#dedede"/>';
})();
</script>
</body>
</html>
